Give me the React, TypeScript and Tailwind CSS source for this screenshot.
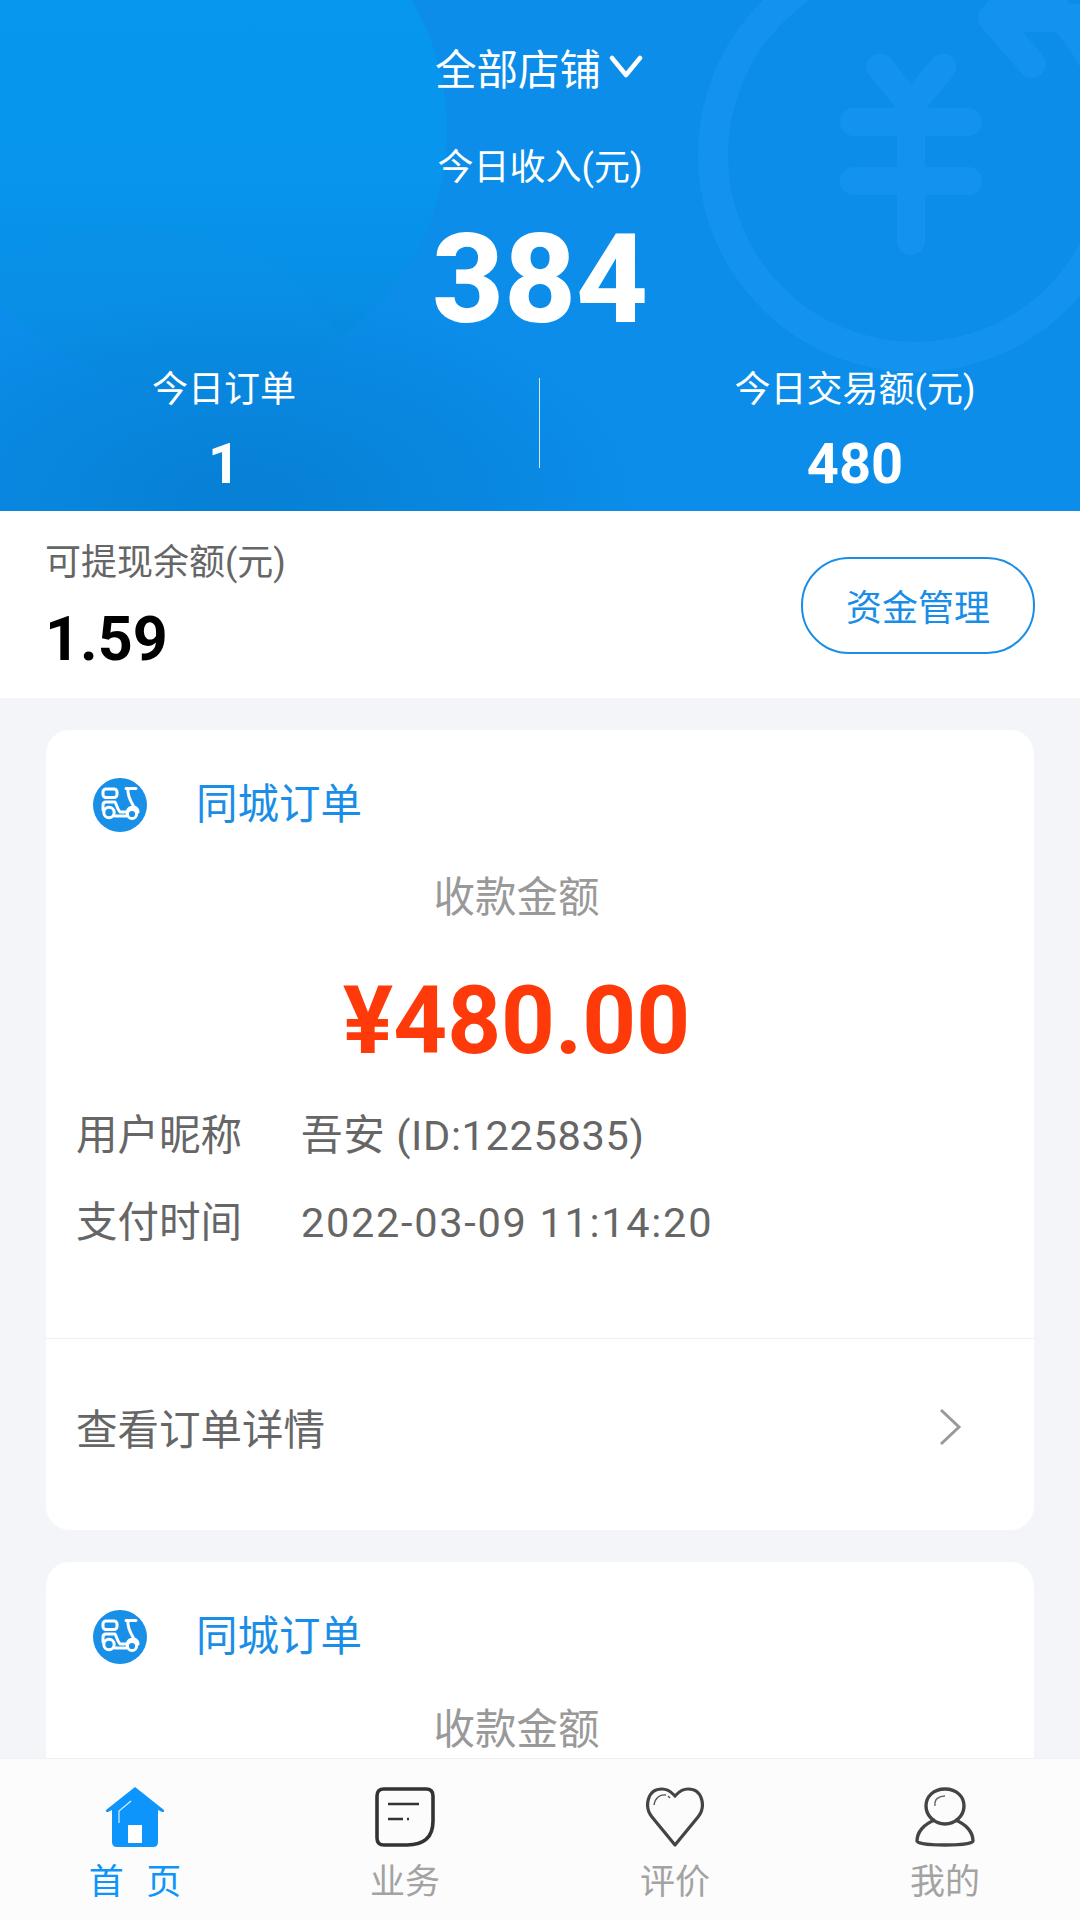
const font = "font-['Roboto','Noto_Sans_CJK_SC',sans-serif]"

function HeaderArt() {
  return (
    <svg className="absolute inset-0 h-full w-full" viewBox="0 0 1080 511" fill="none">
      <defs>
        <radialGradient id="dark" cx="0.5" cy="0.5" r="0.5">
          <stop offset="0" stopColor="#067ed2" stopOpacity="0.9" />
          <stop offset="0.55" stopColor="#067ed2" stopOpacity="0.45" />
          <stop offset="1" stopColor="#067ed2" stopOpacity="0" />
        </radialGradient>
        <linearGradient id="disc" x1="0" y1="0" x2="0" y2="1">
          <stop offset="0" stopColor="#0798f0" />
          <stop offset="0.6" stopColor="#0795ed" />
          <stop offset="1" stopColor="#0789df" />
        </linearGradient>
        <clipPath id="discClip">
          <circle cx="190" cy="130" r="257" />
        </clipPath>
      </defs>
      <rect width="1080" height="511" fill="#0b8de9" />
      <circle cx="190" cy="130" r="257" fill="url(#disc)" />
      <g clipPath="url(#discClip)">
        <ellipse cx="130" cy="405" rx="225" ry="178" fill="#0b90e8" fillOpacity="0.5" />
      </g>
      <ellipse cx="240" cy="500" rx="400" ry="210" fill="url(#dark)" />
      <circle cx="915" cy="155" r="202" stroke="#1393ee" strokeWidth="30" />
      <g stroke="#1393ee" strokeLinecap="round" strokeLinejoin="round">
        <path d="M880 67 L911 105 L943 67" strokeWidth="27" />
        <path d="M854 122 H968 M854 181 H968" strokeWidth="28" />
        <path d="M911 105 V241" strokeWidth="28" />
        <path d="M1095 18 H992 M992 18 L1032 64 M992 18 L1012 -4" strokeWidth="28" />
      </g>
    </svg>
  )
}

function ScooterIcon() {
  return (
    <svg className="h-[54px] w-[54px] shrink-0" viewBox="0 0 54 54" fill="none">
      <circle cx="27" cy="27" r="27" fill="#1890e8" />
      <g stroke="#fff" strokeWidth="3" strokeLinecap="round" strokeLinejoin="round">
        <rect x="10" y="11" width="14" height="8.5" rx="3" />
        <path d="M33 10.5 H43 M35 11 C34 17 38 24 41 29 M10 32 V27 C10 25 11 24 13 24 H22 C24 27 24 31 27 34 H34 C35 30 38 29 41 29 C44 30 45 32 45 34" />
        <circle cx="16" cy="34.5" r="5.2" />
        <circle cx="39" cy="36" r="4.6" />
        <path d="M22 38 H33" />
      </g>
    </svg>
  )
}

function OrderCard({ clipped }: { clipped?: boolean }) {
  return (
    <div className={`rounded-[24px] bg-white pt-[45px] ${clipped ? "h-[400px]" : ""}`}>
      <div className="flex h-[60px] items-center pl-[47px]">
        <ScooterIcon />
        <span className="ml-[49px] text-[41.5px] leading-[60px] text-[#1a8ee6]">同城订单</span>
      </div>
      <div className="mt-[33px] pr-[47px] text-center text-[41.5px] leading-[60px] text-[#999999]">收款金额</div>
      {!clipped && (
        <>
          <div className="mt-[38px] pr-[47px] text-center text-[94px] font-bold leading-[110px] text-[#ff3a0a]">¥480.00</div>
          <div className="mt-[30px] flex pl-[30px] text-[41.5px] leading-[60px] text-[#666666]">
            <span className="w-[225px]">用户昵称</span>
            <span className="tracking-[0.65px]">吾安 (ID:1225835)</span>
          </div>
          <div className="mt-[27px] flex pl-[30px] text-[41.5px] leading-[60px] text-[#666666]">
            <span className="w-[225px]">支付时间</span>
            <span className="tracking-[1.7px]">2022-03-09 11:14:20</span>
          </div>
          <div className="mt-[85px] h-px bg-[#f0f0f0]" />
          <div className="flex h-[191px] items-center justify-between pb-[6px] pl-[30px] pr-[72px] text-[41.5px] text-[#666666]">
            <span>查看订单详情</span>
            <svg className="-mt-[10px] h-[38px] w-[24px]" viewBox="0 0 24 38" fill="none">
              <path d="M3 2 L21 19 L3 36" stroke="#999999" strokeWidth="3" />
            </svg>
          </div>
        </>
      )}
    </div>
  )
}

const tabIcons = {
  home: (
    <svg className="h-[60px] w-[60px]" viewBox="0 0 60 60" fill="none">
      <path d="M30 0 L59 23 Q60 25 57 25 L53 23 V55 Q53 60 48 60 H12 Q7 60 7 55 V23 L3 25 Q0 25 1 23 Z" fill="#0d95fb" />
      <path d="M14 36 V24 L26 14" stroke="#d8eeff" strokeWidth="1.2" />
      <rect x="23" y="38" width="14" height="18" fill="#fff" />
    </svg>
  ),
  doc: (
    <svg className="h-[60px] w-[60px]" viewBox="0 0 60 60" fill="none">
      <path d="M9 2 H51 Q58 2 58 9 V34 Q58 58 32 58 H9 Q2 58 2 51 V9 Q2 2 9 2 Z" stroke="#333333" strokeWidth="3.6" />
      <path d="M13 17 H44 M13 32 H28" stroke="#333333" strokeWidth="2.4" />
      <path d="M32 32 H34" stroke="#333333" strokeWidth="2.4" />
    </svg>
  ),
  heart: (
    <svg className="h-[60px] w-[60px]" viewBox="0 0 60 60" fill="none">
      <path d="M30 58 L7 30 C-1 20 2 2 17 2 C24 2 27 6 30 9 C33 6 36 2 43 2 C58 2 61 20 53 30 Z" stroke="#444444" strokeWidth="3.2" strokeLinejoin="round" />
      <path d="M9 18 C10 11 15 7 21 8 M23 9 L25 11" stroke="#555555" strokeWidth="1.4" />
    </svg>
  ),
  user: (
    <svg className="h-[60px] w-[60px]" viewBox="0 0 60 60" fill="none">
      <path d="M30 2 C18 2 11 10 11 19 C11 29 20 37 30 37 C40 37 49 29 49 19 C49 10 42 2 30 2 Z" stroke="#444444" strokeWidth="3.4" />
      <path d="M20 33 C9 37 2 45 2 54 C2 57 18 58 30 58 C42 58 58 57 58 54 C58 45 51 37 40 33" stroke="#444444" strokeWidth="3.4" />
      <path d="M20 19 C19 12 24 9 30 9" stroke="#666666" strokeWidth="1.4" />
    </svg>
  ),
}

function Tab({ icon, label, active }: { icon: keyof typeof tabIcons; label: string; active?: boolean }) {
  return (
    <div className="flex flex-1 flex-col items-center pt-[28px]">
      {tabIcons[icon]}
      <span className={`mt-[11px] text-[35px] leading-[50px] [word-spacing:14px] ${active ? "text-[#0d95fb]" : "text-[#a3a3a3]"}`}>{label}</span>
    </div>
  )
}

export default function App() {
  return (
    <div className={`${font} flex h-[1920px] w-[1080px] flex-col overflow-hidden bg-[#f3f5f9]`}>
      <header className="relative h-[511px] shrink-0 overflow-hidden text-white">
        <HeaderArt />
        <div className="relative flex flex-col items-center pt-[41px]">
          <div className="flex h-[60px] items-center pr-[2px] text-[41.5px] leading-[60px]">
            全部店铺
            <svg className="ml-[8px] h-[24px] w-[34px] -translate-y-[4px]" viewBox="0 0 34 24" fill="none">
              <path d="M3 3 L17 20 L31 3" stroke="#fff" strokeWidth="4.5" strokeLinecap="round" strokeLinejoin="round" />
            </svg>
          </div>
          <div className="mt-[42px] text-[36px] leading-[50px]">今日收入(元)</div>
          <div className="mt-[27px] text-[125px] font-extrabold leading-[120px]">384</div>
          <div className="mt-[25px] flex w-full justify-between">
            <div className="w-[448px] text-center">
              <div className="text-[36px] leading-[50px]">今日订单</div>
              <div className="mt-[14px] text-[56px] font-bold leading-[70px]">1</div>
            </div>
            <div className="mt-[13px] h-[90px] w-px bg-white/80" />
            <div className="w-[450px] text-center">
              <div className="text-[36px] leading-[50px]">今日交易额(元)</div>
              <div className="mt-[14px] text-[56px] font-bold leading-[70px]">480</div>
            </div>
          </div>
        </div>
      </header>

      <section className="flex h-[187px] shrink-0 items-center justify-between bg-white pl-[45px] pr-[45px] pt-[5px]">
        <div>
          <div className="text-[36px] leading-[50px] text-[#666666]">可提现余额(元)</div>
          <div className="mt-[13px] text-[61px] font-bold leading-[76px] text-black">1.59</div>
        </div>
        <button className="-mt-[3px] h-[97px] w-[234px] rounded-[48px] border-2 border-[#1a8ee6] pt-[6px] text-[36px] text-[#1a8ee6]">资金管理</button>
      </section>

      <main className="min-h-0 flex-1 overflow-hidden pl-[46px] pr-[46px] pt-[32px]">
        <OrderCard />
        <div className="mt-[32px]">
          <OrderCard clipped />
        </div>
      </main>

      <nav className="flex h-[162px] shrink-0 border-t border-[#f0f0f2] bg-[#fcfcfd]">
        <Tab icon="home" label="首 页" active />
        <Tab icon="doc" label="业务" />
        <Tab icon="heart" label="评价" />
        <Tab icon="user" label="我的" />
      </nav>
    </div>
  )
}
